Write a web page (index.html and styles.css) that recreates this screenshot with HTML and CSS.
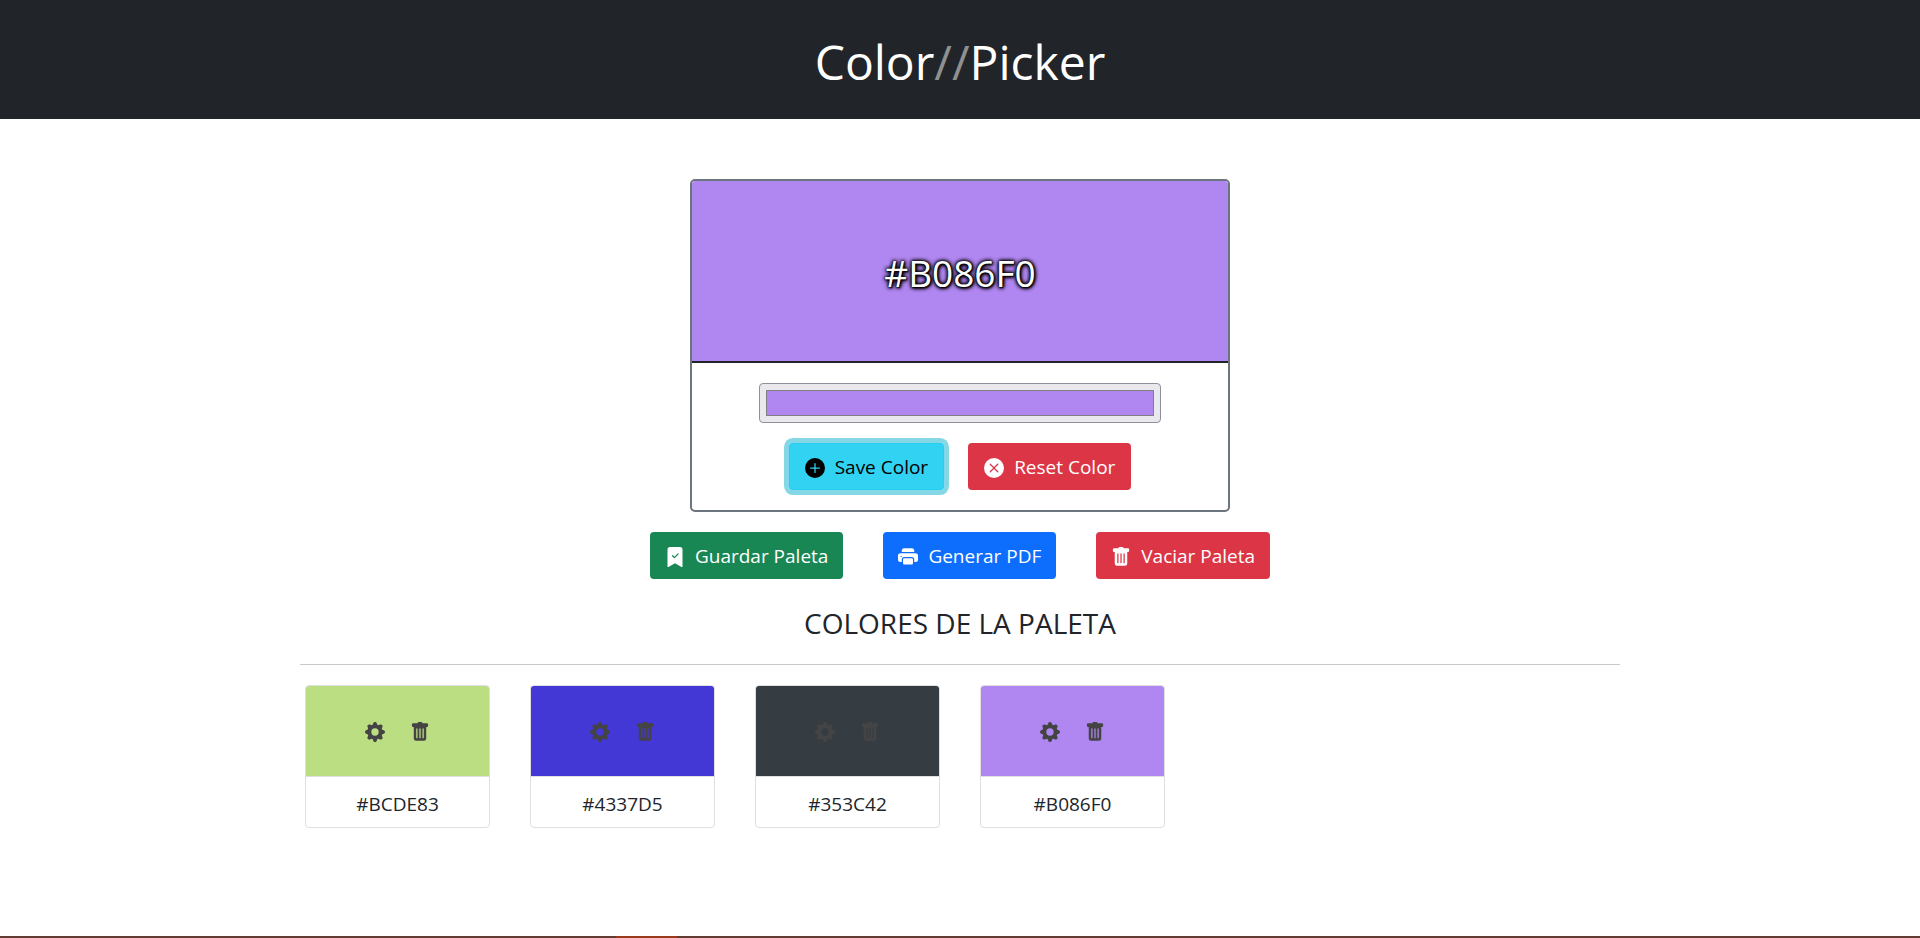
FILE: index.html
```html
<!DOCTYPE html>
<html lang="es">
<head>
  <meta charset="utf-8">
  <meta name="viewport" content="width=device-width, initial-scale=1">
  <title>Color//Picker</title>
  <link rel="stylesheet" href="styles.css">
</head>
<body>
  <svg class="sprite" aria-hidden="true">
    <symbol id="plus" viewBox="0 0 16 16"><path d="M16 8A8 8 0 1 1 0 8a8 8 0 0 1 16 0zM8.500 4.500a.5.5 0 0 0-1 0v3h-3a.5.5 0 0 0 0 1h3v3a.5.5 0 0 0 1 0v-3h3a.5.5 0 0 0 0-1h-3v-3z"/></symbol>
    <symbol id="cross" viewBox="0 0 16 16"><path d="M16 8A8 8 0 1 1 0 8a8 8 0 0 1 16 0zM5.354 4.646a.5.5 0 1 0-.708.708L7.293 8l-2.647 2.646a.5.5 0 0 0 .708.708L8 8.707l2.646 2.647a.5.5 0 0 0 .708-.708L8.707 8l2.647-2.646a.5.5 0 0 0-.708-.708L8 7.293 5.354 4.646z"/></symbol>
    <symbol id="bookmark" viewBox="0 0 16 16"><path fill-rule="evenodd" d="M2 15.5V2a2 2 0 0 1 2-2h8a2 2 0 0 1 2 2v13.500a.5.5 0 0 1-.74.439L8 13.069l-5.260 2.870A.5.5 0 0 1 2 15.500zm8.854-9.646a.5.5 0 0 0-.708-.708L7.500 7.793 6.354 6.646a.5.5 0 1 0-.708.708l1.500 1.500a.5.5 0 0 0 .708 0l3-3z"/></symbol>
    <symbol id="printer" viewBox="0 0 16 16"><path d="M5 1a2 2 0 0 0-2 2v1h10V3a2 2 0 0 0-2-2H5zm6 8H5a1 1 0 0 0-1 1v3a1 1 0 0 0 1 1h6a1 1 0 0 0 1-1v-3a1 1 0 0 0-1-1z"/><path d="M0 7a2 2 0 0 1 2-2h12a2 2 0 0 1 2 2v3a2 2 0 0 1-2 2h-1v-2a2 2 0 0 0-2-2H5a2 2 0 0 0-2 2v2H2a2 2 0 0 1-2-2V7zm2.500 1a.5.5 0 1 0 0-1 .5.5 0 0 0 0 1z"/></symbol>
    <symbol id="trash" viewBox="0 0 16 16"><path d="M2.500 1a1 1 0 0 0-1 1v1a1 1 0 0 0 1 1H3v9a2 2 0 0 0 2 2h6a2 2 0 0 0 2-2V4h.5a1 1 0 0 0 1-1V2a1 1 0 0 0-1-1H10a1 1 0 0 0-1-1H7a1 1 0 0 0-1 1H2.500zm3 4a.5.5 0 0 1 .5.5v7a.5.5 0 0 1-1 0v-7a.5.5 0 0 1 .5-.5zM8 5a.5.5 0 0 1 .5.5v7a.5.5 0 0 1-1 0v-7A.5.5 0 0 1 8 5zm3 .5v7a.5.5 0 0 1-1 0v-7a.5.5 0 0 1 1 0z"/></symbol>
    <symbol id="gear" viewBox="0 0 16 16"><path d="M9.405 1.050c-.413-1.400-2.397-1.400-2.810 0l-.1.340a1.464 1.464 0 0 1-2.105.872l-.310-.170c-1.283-.698-2.686.705-1.987 1.987l.169.311c.446.820.023 1.841-.872 2.105l-.340.1c-1.400.413-1.400 2.397 0 2.810l.340.1a1.464 1.464 0 0 1 .872 2.105l-.170.310c-.698 1.283.705 2.686 1.987 1.987l.311-.169a1.464 1.464 0 0 1 2.105.872l.1.340c.413 1.400 2.397 1.400 2.810 0l.1-.340a1.464 1.464 0 0 1 2.105-.872l.310.170c1.283.698 2.686-.705 1.987-1.987l-.169-.311a1.464 1.464 0 0 1 .872-2.105l.340-.1c1.400-.413 1.400-2.397 0-2.810l-.340-.1a1.464 1.464 0 0 1-.872-2.105l.170-.310c.698-1.283-.705-2.686-1.987-1.987l-.311.169a1.464 1.464 0 0 1-2.105-.872l-.1-.340zM8 10.930a2.929 2.929 0 1 1 0-5.860 2.929 2.929 0 0 1 0 5.858z"/></symbol>
  </svg>

  <header class="header">
    <h1 class="brand">Color<span class="brand-slashes">//</span>Picker</h1>
  </header>

  <main class="container">
    <section class="picker">
      <div class="preview"><output class="preview-code" for="color">#B086F0</output></div>
      <div class="picker-body">
        <input class="color-input" id="color" type="color" value="#b086f0" aria-label="Color">
        <div class="picker-actions">
          <button class="btn btn-info" type="button"><svg class="icon"><use href="#plus"/></svg>Save Color</button>
          <button class="btn btn-danger" type="button"><svg class="icon"><use href="#cross"/></svg>Reset Color</button>
        </div>
      </div>
    </section>

    <div class="palette-actions">
      <button class="btn btn-success" type="button"><svg class="icon"><use href="#bookmark"/></svg>Guardar Paleta</button>
      <button class="btn btn-primary" type="button"><svg class="icon"><use href="#printer"/></svg>Generar PDF</button>
      <button class="btn btn-danger" type="button"><svg class="icon"><use href="#trash"/></svg>Vaciar Paleta</button>
    </div>

    <h2 class="palette-title">COLORES DE LA PALETA</h2>

    <ul class="palette">
      <li class="card">
        <div class="swatch" style="background-color: #bcde83">
          <button class="icon-btn" type="button" aria-label="Editar"><svg class="icon"><use href="#gear"/></svg></button>
          <button class="icon-btn" type="button" aria-label="Eliminar"><svg class="icon"><use href="#trash"/></svg></button>
        </div>
        <p class="card-code">#BCDE83</p>
      </li>
      <li class="card">
        <div class="swatch" style="background-color: #4337d5">
          <button class="icon-btn" type="button" aria-label="Editar"><svg class="icon"><use href="#gear"/></svg></button>
          <button class="icon-btn" type="button" aria-label="Eliminar"><svg class="icon"><use href="#trash"/></svg></button>
        </div>
        <p class="card-code">#4337D5</p>
      </li>
      <li class="card">
        <div class="swatch" style="background-color: #353c42">
          <button class="icon-btn" type="button" aria-label="Editar"><svg class="icon"><use href="#gear"/></svg></button>
          <button class="icon-btn" type="button" aria-label="Eliminar"><svg class="icon"><use href="#trash"/></svg></button>
        </div>
        <p class="card-code">#353C42</p>
      </li>
      <li class="card">
        <div class="swatch" style="background-color: #b086f0">
          <button class="icon-btn" type="button" aria-label="Editar"><svg class="icon"><use href="#gear"/></svg></button>
          <button class="icon-btn" type="button" aria-label="Eliminar"><svg class="icon"><use href="#trash"/></svg></button>
        </div>
        <p class="card-code">#B086F0</p>
      </li>
    </ul>
  </main>

  <div class="bottom-line"></div>
</body>
</html>
```

FILE: styles.css
```css
*,
*::before,
*::after {
  box-sizing: border-box;
}

body {
  display: flex;
  flex-direction: column;
  min-height: 100vh;
  margin: 0;
  background: #fff;
  color: #212529;
  font-family: "Segoe UI", "Open Sans", "Noto Sans", sans-serif;
  font-size: 19px;
  line-height: 30px;
}

.sprite {
  display: none;
}

.header {
  padding: 32px 16px 27px;
  background: #212529;
  color: #fff;
  text-align: center;
}

.brand {
  margin: 0;
  font-size: 48px;
  font-weight: 400;
  line-height: 60px;
}

.brand-slashes {
  color: #909090;
}

.container {
  flex: 1;
  width: 100%;
  max-width: 1320px;
  margin: 0 auto;
  padding-top: 60px;
}

.picker {
  max-width: 540px;
  margin: 0 auto;
  overflow: hidden;
  border: 2px solid #6c757d;
  border-radius: 5px;
}

.preview {
  display: flex;
  align-items: center;
  justify-content: center;
  height: 182px;
  padding-top: 4px;
  border-bottom: 2px solid #212529;
  background: #b086f0;
}

.preview-code {
  color: #fff;
  font-size: 37px;
  line-height: 48px;
  text-shadow: 1px 1px 2px #000, 1px 1px 4px #000, 0 0 4px #000, 0 0 4px #000, 0 0 2px #000;
}

.picker-body {
  display: flex;
  flex-direction: column;
  align-items: center;
  gap: 20px;
  padding: 20px 16px;
}

.color-input {
  appearance: none;
  width: 100%;
  max-width: 402px;
  height: 40px;
  padding: 6px;
  border: 1px solid #8f8f9d;
  border-radius: 4px;
  background: #e9e9ed;
}

.color-input::-webkit-color-swatch-wrapper {
  padding: 0;
}

.color-input::-webkit-color-swatch {
  border: 1px solid #808080;
  border-radius: 0;
}

.picker-actions,
.palette-actions {
  display: flex;
  flex-wrap: wrap;
  justify-content: center;
  gap: 24px;
}

.palette-actions {
  gap: 40px;
  margin-top: 20px;
}

.btn {
  display: inline-flex;
  align-items: center;
  gap: 10px;
  padding: 9px 15px 7px;
  border: 1px solid transparent;
  border-radius: 4px;
  color: #fff;
  font: inherit;
  line-height: 29px;
}

.palette-actions .btn {
  padding-right: 14px;
  padding-left: 14px;
}

.btn-info {
  border-color: #25cff2;
  background: #31d2f2;
  color: #000;
  box-shadow: 0 0 0 5px #86d7e6;
}

.btn-danger {
  background-color: #dc3545;
}

.btn-success {
  background-color: #198754;
}

.btn-primary {
  background-color: #0d6efd;
}

.icon {
  flex: none;
  display: block;
  width: 20px;
  height: 20px;
  fill: currentColor;
}

.palette-title {
  margin: 26px 0 0;
  padding-bottom: 23px;
  border-bottom: 1px solid #c8c9ca;
  font-size: 28px;
  font-weight: 400;
  line-height: 36px;
  text-align: center;
}

.palette {
  display: flex;
  flex-wrap: wrap;
  gap: 40px;
  margin: 20px 5px 0;
  padding: 0;
  list-style: none;
}

.card {
  width: 185px;
  overflow: hidden;
  border: 1px solid #dfdfdf;
  border-radius: 4px;
}

.swatch {
  display: flex;
  align-items: center;
  justify-content: center;
  gap: 25px;
  height: 91px;
  padding-top: 2px;
  border-bottom: 1px solid #dfdfdf;
}

.icon-btn {
  padding: 0;
  border: 0;
  background: none;
  color: #444;
}

.card-code {
  margin: 0;
  padding: 12px 8px 8px;
  text-align: center;
}

.bottom-line {
  height: 2px;
  background: linear-gradient(90deg, #623c32 616px, #993a1c 616px, #993a1c 677px, #623c32 677px);
}
```
